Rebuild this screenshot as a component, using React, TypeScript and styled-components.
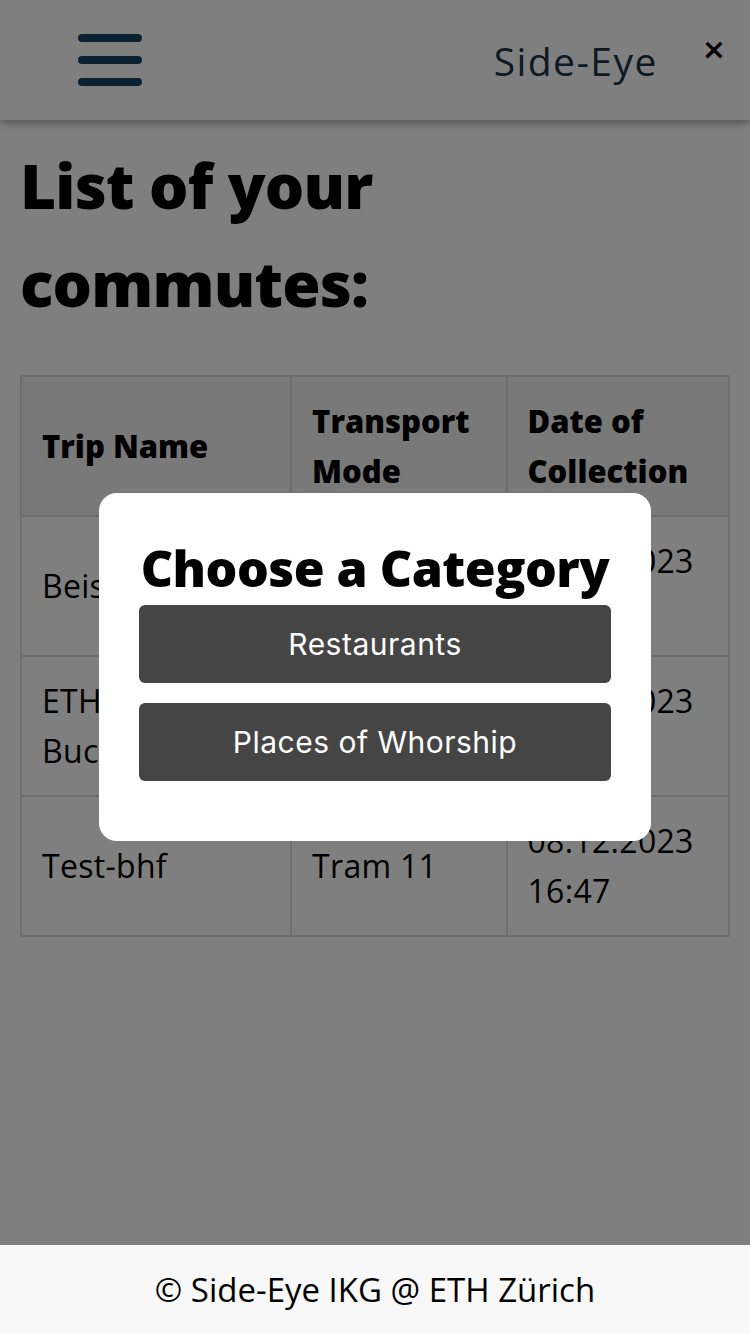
import styled, { createGlobalStyle } from "styled-components"

const GlobalStyle = createGlobalStyle`
  body {
    margin: 0;
    background: #ffffff;
    font-family: "Open Sans", "Noto Sans", sans-serif;
    color: #000000;
  }
`

type Trip = {
  name: string
  mode: string
  date: string
}

const trips: Trip[] = [
  { name: "Beispiel", mode: "Bus 31", date: "07.12.2023 09:12" },
  { name: "ETH Bucheggplatz", mode: "Tram 15", date: "07.12.2023 18:05" },
  { name: "Test-bhf", mode: "Tram 11", date: "08.12.2023 16:47" }
]

const Page = styled.div`
  min-height: 100vh;
  padding-bottom: 89px;
  box-sizing: border-box;
`

const TopBar = styled.header`
  height: 120px;
  display: flex;
  align-items: center;
  padding: 0 24px 0 78px;
  background: #ffffff;
  box-shadow: 0 3px 8px rgba(0, 0, 0, 0.35);
`

const Hamburger = styled.button`
  display: flex;
  flex-direction: column;
  gap: 14px;
  padding: 0;
  border: none;
  background: none;
  margin-top: -1px;
  span {
    display: block;
    width: 64px;
    height: 8px;
    border-radius: 4px;
    background: #1a4563;
  }
`

const Brand = styled.div`
  margin-left: auto;
  font-size: 39px;
  font-weight: 500;
  letter-spacing: 1.4px;
  color: #1a3547;
`

const CloseMark = styled.span`
  margin-left: 44px;
  margin-top: -22px;
  font-family: "DejaVu Sans", sans-serif;
  font-weight: bold;
  font-size: 29px;
  color: #000;
`

const Main = styled.main`
  padding: 0 20px;
`

const Title = styled.h1`
  margin: 16px 0 43px;
  font-size: 62px;
  line-height: 98px;
  font-weight: 800;
  letter-spacing: -0.8px;
`

const Table = styled.table`
  width: 710px;
  border-collapse: collapse;
  font-size: 32px;
  letter-spacing: 0.3px;
`

const HeadCell = styled.th<{ width: number }>`
  width: ${ ({ width }) => width }px;
  height: 140px;
  padding: 0 20px;
  text-align: left;
  font-size: 31px;
  font-weight: 800;
  line-height: 50px;
  letter-spacing: 0;
  background: #f2f2f2;
  border: 2px solid #dddddd;
  box-sizing: border-box;
`

const Cell = styled.td`
  height: 138px;
  padding: 0 20px;
  line-height: 50px;
  border: 2px solid #dddddd;
`

const Overlay = styled.div`
  position: fixed;
  inset: 0;
  background: rgba(0, 0, 0, 0.5);
  display: flex;
  align-items: center;
  justify-content: center;
  z-index: 10;
`

const Dialog = styled.div`
  width: 552px;
  box-sizing: border-box;
  padding: 46px 40px 60px;
  background: #ffffff;
  border-radius: 18px;
  display: flex;
  flex-direction: column;
  gap: 20px;
`

const DialogTitle = styled.h2`
  margin: 0 0 -12px;
  text-align: center;
  font-size: 50px;
  line-height: 58px;
  font-weight: 800;
  letter-spacing: -0.5px;
  white-space: nowrap;
`

const CategoryButton = styled.button`
  height: 78px;
  border: none;
  border-radius: 6px;
  background: #454545;
  color: #ffffff;
  font-family: Inter, sans-serif;
  font-size: 30px;
  letter-spacing: 0.5px;
`

const Footer = styled.footer`
  position: fixed;
  left: 0;
  right: 0;
  bottom: 0;
  height: 89px;
  display: flex;
  align-items: center;
  justify-content: center;
  background: #f8f8f8;
  font-size: 33px;
  z-index: 20;
`

const columns = [
  { header: "Trip Name", width: 271 },
  { header: "Transport Mode", width: 216 },
  { header: "Date of Collection", width: 223 }
]

const App = () => (
  <Page>
    <GlobalStyle />
    <TopBar>
      <Hamburger aria-label="Menu">
        <span />
        <span />
        <span />
      </Hamburger>
      <Brand>Side-Eye</Brand>
      <CloseMark>×</CloseMark>
    </TopBar>
    <Main>
      <Title>List of your commutes:</Title>
      <Table>
        <thead>
          <tr>
            { columns.map(col => (
              <HeadCell key={ col.header } width={ col.width }>{ col.header }</HeadCell>
            )) }
          </tr>
        </thead>
        <tbody>
          { trips.map(trip => (
            <tr key={ trip.name }>
              <Cell>{ trip.name }</Cell>
              <Cell>{ trip.mode }</Cell>
              <Cell>{ trip.date }</Cell>
            </tr>
          )) }
        </tbody>
      </Table>
    </Main>
    <Overlay>
      <Dialog>
        <DialogTitle>Choose a Category</DialogTitle>
        <CategoryButton>Restaurants</CategoryButton>
        <CategoryButton>Places of Whorship</CategoryButton>
      </Dialog>
    </Overlay>
    <Footer>© Side-Eye IKG @ ETH Zürich</Footer>
  </Page>
)

export default App
